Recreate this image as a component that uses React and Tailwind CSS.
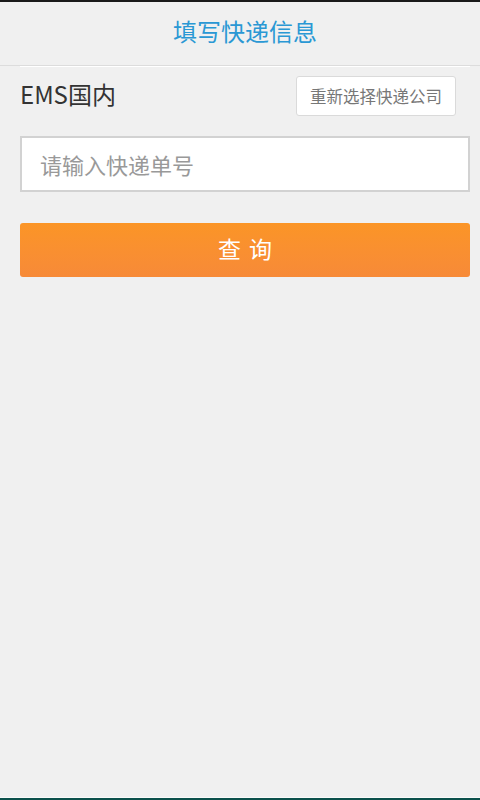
export default function App() {
  const font = { fontFamily: '"Noto Sans CJK SC", "Noto Sans", sans-serif' };
  return (
    <div className="w-[480px] h-[800px] bg-[#f0f0f0] flex flex-col overflow-hidden" style={font}>
      <div className="h-[2px] bg-[#1a1a1a]" />
      <div className="h-[64px] flex items-center justify-center border-b border-[#dcdcdc] pb-[5px] pl-[10px]">
        <span className="text-[24px] leading-none text-[#2a98d4]">填写快递信息</span>
      </div>
      <div className="ml-[20px] mr-[10px] h-[1px] bg-white" />
      <div className="flex-1 pl-[20px] pr-[10px] flex flex-col">
        <div className="flex items-center justify-between pt-[9px] pr-[14px]">
          <span className="text-[24px] text-[#333] leading-none pb-[4px]">EMS国内</span>
          <div className="w-[160px] h-[40px] bg-white border border-[#dadada] rounded-[3px] flex items-center justify-center">
            <span className="text-[16.5px] text-[#777] leading-none">重新选择快递公司</span>
          </div>
        </div>
        <div className="mt-[20px] h-[56px] bg-white border-2 border-[#d2d2d2] flex items-center pl-[18px]">
          <span className="text-[22px] text-[#999] leading-none">请输入快递单号</span>
        </div>
        <div className="mt-[31px] h-[54px] rounded-[3px] bg-gradient-to-b from-[#fb9526] to-[#f78a38] flex items-center justify-center pb-[4px]">
          <span className="text-[23px] text-white leading-none tracking-[8px] pl-[8px]">查询</span>
        </div>
      </div>
      <div className="h-[1px] bg-[#fafafa]" />
      <div className="h-[2px] bg-[#0b504b]" />
    </div>
  );
}
